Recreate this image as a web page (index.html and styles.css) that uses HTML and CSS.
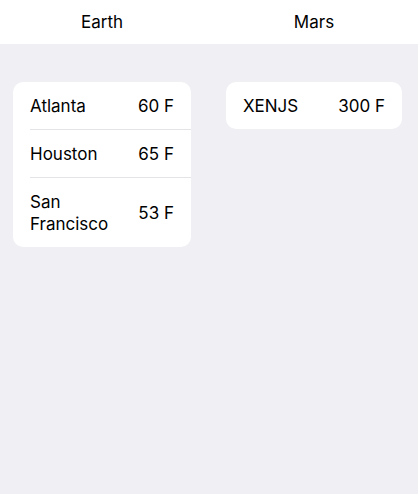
FILE: index.html
```html
<!DOCTYPE html>
<html>
<head>
<meta charset="utf-8">
<link rel="stylesheet" href="styles.css">
</head>
<body>
<div class="page">
  <div class="header">
    <div class="col col-left"><span class="title">Earth</span></div>
    <div class="col col-right"><span class="title">Mars</span></div>
  </div>
  <div class="content">
    <div class="col col-left">
      <div class="card card-left">
        <div class="row"><span class="name">Atlanta</span><span class="temp">60 F</span></div>
        <div class="row"><span class="name">Houston</span><span class="temp">65 F</span></div>
        <div class="row"><span class="name">San Francisco</span><span class="temp">53 F</span></div>
      </div>
    </div>
    <div class="col col-right">
      <div class="card card-right">
        <div class="row"><span class="name">XENJS</span><span class="temp">300 F</span></div>
      </div>
    </div>
  </div>
</div>
</body>
</html>
```
FILE: styles.css
```css
html, body {
  margin: 0;
  padding: 0;
  height: 100%;
}
body {
  background: #efeff4;
  font-family: Inter, "Noto Sans", "Liberation Sans", sans-serif;
  color: #000;
  font-size: 17px;
}
.page {
  display: flex;
  flex-direction: column;
  min-height: 100%;
}
.header, .content {
  display: grid;
  grid-template-columns: 204px 208px;
  column-gap: 6px;
}
.header {
  background: #fff;
  height: 44px;
  align-items: center;
}
.header .col {
  text-align: center;
}
.title {
  font-size: 17px;
  line-height: 22px;
}
.content {
  padding-top: 38px;
  align-items: start;
}
.card {
  background: #fff;
  border-radius: 10px;
  overflow: hidden;
}
.card-left {
  margin: 0 13px;
}
.card-right {
  margin: 0 16px;
}
.row {
  display: flex;
  align-items: center;
  gap: 10px;
  margin-left: 17px;
  padding: 12.5px 17px 12.5px 0;
  line-height: 22px;
  border-top: 1px solid #e4e4e8;
}
.row:first-child {
  border-top: none;
}
.name {
  flex: 1;
  min-width: 0;
}
.temp {
  white-space: nowrap;
}
```
